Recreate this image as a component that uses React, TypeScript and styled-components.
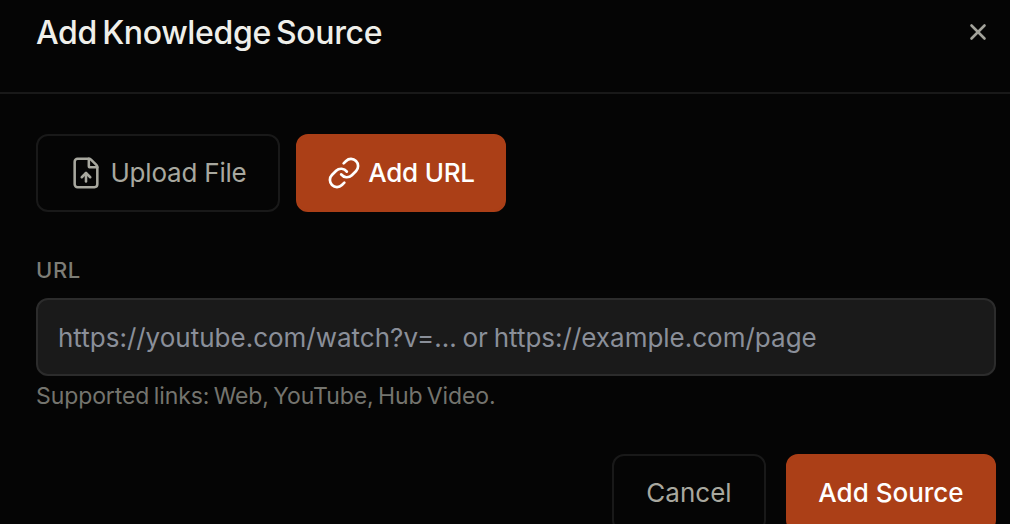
import styled, { createGlobalStyle } from "styled-components"
import { FileUp, Link, X } from "lucide-react"

const GlobalStyle = createGlobalStyle`
    html, body {
        margin: 0;
        padding: 0;
        height: 100%;
        overflow: hidden;
        background-color: #050505;
        font-family: Inter, "Liberation Sans", sans-serif;
    }
`;

const Dialog = styled.div`
    width: 1010px;
    height: 524px;
    overflow: hidden;
    background-color: #050505;
`;

const Header = styled.header`
    height: 94px;
    box-sizing: border-box;
    border-bottom: 2px solid #191919;
    padding: 13px 19px 0 36px;
    display: flex;
    justify-content: space-between;
    align-items: flex-start;
`;

const Title = styled.h1`
    margin: 0;
    font-size: 32px;
    line-height: 40px;
    font-weight: 500;
    letter-spacing: -0.35px;
    word-spacing: -3px;
    color: #efefea;
`;

const CloseButton = styled.button`
    margin-top: 6px;
    padding: 0;
    border: none;
    background: none;
    color: #a3a39b;
    display: flex;
`;

const Body = styled.main`
    padding: 40px 14px 0 36px;
    display: flex;
    flex-direction: column;
`;

const Tabs = styled.div`
    display: flex;
    gap: 16px;
`;

const Tab = styled.button<{ $active?: boolean; $width: number }>`
    width: ${(p) => p.$width}px;
    height: 78px;
    box-sizing: border-box;
    border-radius: 12px;
    border: 2px solid ${(p) => (p.$active ? "#ab3f17" : "#191919")};
    background-color: ${(p) => (p.$active ? "#ab3f17" : "transparent")};
    color: ${(p) => (p.$active ? "#ffffff" : "#a8a89f")};
    font-family: inherit;
    font-size: 26px;
    letter-spacing: -0.2px;
    font-weight: ${(p) => (p.$active ? 500 : 400)};
    display: flex;
    align-items: center;
    justify-content: center;
    gap: 7px;
    padding: 0 0 2px;
    svg {
        margin-top: 2px;
    }
`;

const Label = styled.label`
    margin-top: 44px;
    font-size: 22px;
    line-height: 28px;
    font-weight: 500;
    letter-spacing: 0.6px;
    color: #7d7d76;
`;

const UrlInput = styled.input`
    margin-top: 14px;
    width: 960px;
    height: 78px;
    box-sizing: border-box;
    border-radius: 12px;
    border: 2px solid #2c2c2c;
    background-color: #1a1a1a;
    padding: 0 20px;
    font-family: inherit;
    font-size: 26px;
    word-spacing: -1.5px;
    outline: none;
    &::placeholder {
        color: #8a8f99;
        opacity: 1;
    }
`;

const Help = styled.p`
    margin: 4px 0 0;
    font-size: 23px;
    line-height: 32px;
    letter-spacing: -0.09px;
    word-spacing: -2px;
    color: #74746e;
`;

const Footer = styled.footer`
    margin-top: 42px;
    display: flex;
    justify-content: flex-end;
    gap: 20px;
`;

const FooterButton = styled.button<{ $primary?: boolean; $width: number }>`
    width: ${(p) => p.$width}px;
    height: 78px;
    box-sizing: border-box;
    border-radius: 12px;
    border: 2px solid ${(p) => (p.$primary ? "#ab3f17" : "#191919")};
    background-color: ${(p) => (p.$primary ? "#ab3f17" : "transparent")};
    color: ${(p) => (p.$primary ? "#ffffff" : "#a8a89f")};
    font-family: inherit;
    font-size: 26px;
    font-weight: ${(p) => (p.$primary ? 500 : 400)};
    padding: 0 0 2px;
`;

export default function App() {
    return (
        <Dialog>
            <GlobalStyle />
            <Header>
                <Title>Add Knowledge Source</Title>
                <CloseButton aria-label="Close">
                    <X size={26} strokeWidth={2.4} />
                </CloseButton>
            </Header>
            <Body>
                <Tabs>
                    <Tab $width={244}>
                        <FileUp size={34} strokeWidth={1.8} />
                        Upload File
                    </Tab>
                    <Tab $width={210} $active>
                        <Link size={34} strokeWidth={1.9} />
                        Add URL
                    </Tab>
                </Tabs>
                <Label htmlFor="url">URL</Label>
                <UrlInput id="url" placeholder="https://youtube.com/watch?v=... or https://example.com/page" />
                <Help>Supported links: Web, YouTube, Hub Video.</Help>
                <Footer>
                    <FooterButton $width={154}>Cancel</FooterButton>
                    <FooterButton $width={210} $primary>Add Source</FooterButton>
                </Footer>
            </Body>
        </Dialog>
    );
}
